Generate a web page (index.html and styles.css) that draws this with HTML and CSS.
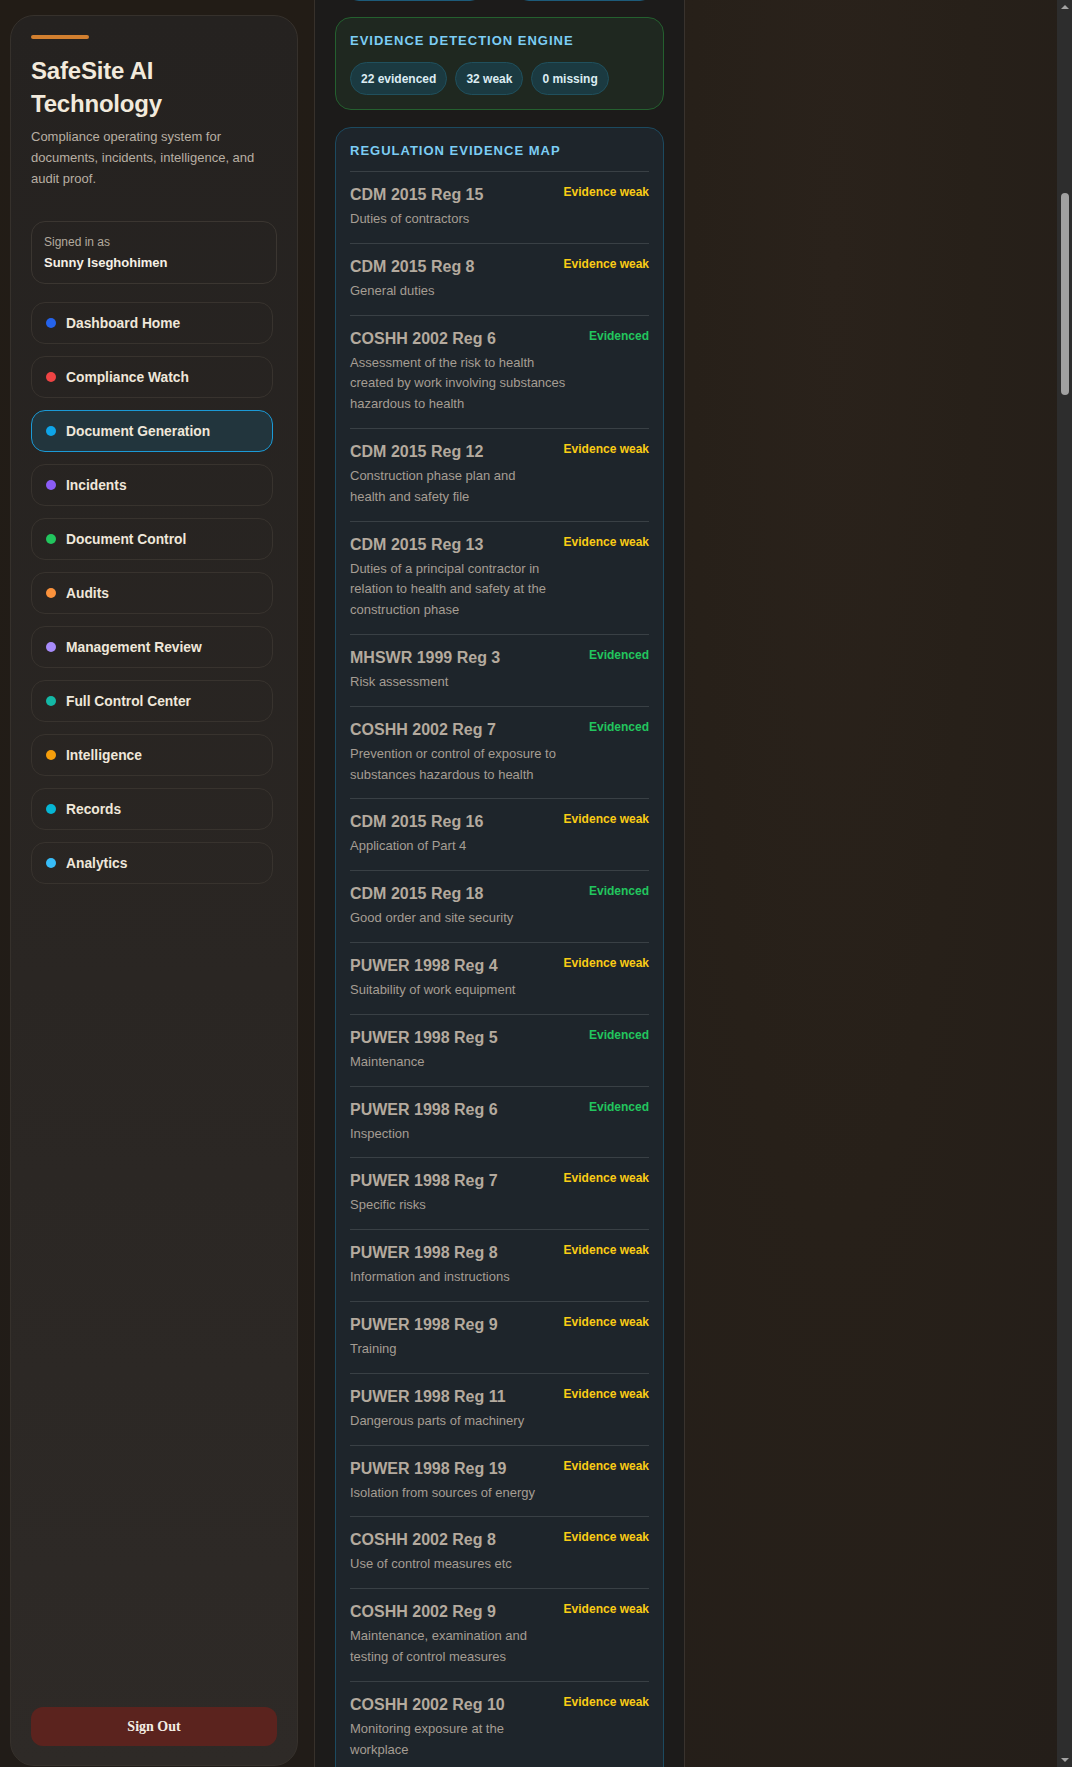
FILE: index.html
```html
<!DOCTYPE html>
<html lang="en">
<head>
<meta charset="utf-8">
<title>SafeSite AI Technology</title>
<link rel="stylesheet" href="styles.css">
</head>
<body>
<div class="app">
  <aside class="aside">
    <div class="side-card">
      <div class="brand-bar"></div>
      <h1 class="brand">SafeSite AI Technology</h1>
      <p class="brand-desc">Compliance operating system for documents, incidents, intelligence, and audit proof.</p>
      <div class="signed">
        <div class="signed-label">Signed in as</div>
        <div class="signed-name">Sunny Iseghohimen</div>
      </div>
      <nav class="nav">
        <a class="nav-item"><span class="dot c-blue"></span>Dashboard Home</a>
        <a class="nav-item"><span class="dot c-red"></span>Compliance Watch</a>
        <a class="nav-item active"><span class="dot c-sky"></span>Document Generation</a>
        <a class="nav-item"><span class="dot c-violet"></span>Incidents</a>
        <a class="nav-item"><span class="dot c-green"></span>Document Control</a>
        <a class="nav-item"><span class="dot c-orange"></span>Audits</a>
        <a class="nav-item"><span class="dot c-lilac"></span>Management Review</a>
        <a class="nav-item"><span class="dot c-teal"></span>Full Control Center</a>
        <a class="nav-item"><span class="dot c-amber"></span>Intelligence</a>
        <a class="nav-item"><span class="dot c-cyan"></span>Records</a>
        <a class="nav-item"><span class="dot c-light"></span>Analytics</a>
      </nav>
      <button class="signout">Sign Out</button>
    </div>
  </aside>

  <main class="main">
    <div class="prev-stats">
      <div class="prev-box"></div>
      <div class="prev-box"></div>
    </div>

    <section class="card card-green">
      <h2 class="card-title">Evidence Detection Engine</h2>
      <div class="pills">
        <span class="pill">22 evidenced</span>
        <span class="pill">32 weak</span>
        <span class="pill">0 missing</span>
      </div>
    </section>

    <section class="card card-blue">
      <h2 class="card-title">Regulation Evidence Map</h2>
      <ul class="reg-list">
        <li class="reg"><div class="reg-text"><div class="reg-name">CDM 2015 Reg 15</div><div class="reg-desc">Duties of contractors</div></div><span class="badge weak">Evidence weak</span></li>
        <li class="reg"><div class="reg-text"><div class="reg-name">CDM 2015 Reg 8</div><div class="reg-desc">General duties</div></div><span class="badge weak">Evidence weak</span></li>
        <li class="reg"><div class="reg-text"><div class="reg-name">COSHH 2002 Reg 6</div><div class="reg-desc">Assessment of the risk to health created by work involving substances hazardous to health</div></div><span class="badge ok">Evidenced</span></li>
        <li class="reg"><div class="reg-text"><div class="reg-name">CDM 2015 Reg 12</div><div class="reg-desc">Construction phase plan and health and safety file</div></div><span class="badge weak">Evidence weak</span></li>
        <li class="reg"><div class="reg-text"><div class="reg-name">CDM 2015 Reg 13</div><div class="reg-desc">Duties of a principal contractor in relation to health and safety at the construction phase</div></div><span class="badge weak">Evidence weak</span></li>
        <li class="reg"><div class="reg-text"><div class="reg-name">MHSWR 1999 Reg 3</div><div class="reg-desc">Risk assessment</div></div><span class="badge ok">Evidenced</span></li>
        <li class="reg"><div class="reg-text"><div class="reg-name">COSHH 2002 Reg 7</div><div class="reg-desc">Prevention or control of exposure to substances hazardous to health</div></div><span class="badge ok">Evidenced</span></li>
        <li class="reg"><div class="reg-text"><div class="reg-name">CDM 2015 Reg 16</div><div class="reg-desc">Application of Part 4</div></div><span class="badge weak">Evidence weak</span></li>
        <li class="reg"><div class="reg-text"><div class="reg-name">CDM 2015 Reg 18</div><div class="reg-desc">Good order and site security</div></div><span class="badge ok">Evidenced</span></li>
        <li class="reg"><div class="reg-text"><div class="reg-name">PUWER 1998 Reg 4</div><div class="reg-desc">Suitability of work equipment</div></div><span class="badge weak">Evidence weak</span></li>
        <li class="reg"><div class="reg-text"><div class="reg-name">PUWER 1998 Reg 5</div><div class="reg-desc">Maintenance</div></div><span class="badge ok">Evidenced</span></li>
        <li class="reg"><div class="reg-text"><div class="reg-name">PUWER 1998 Reg 6</div><div class="reg-desc">Inspection</div></div><span class="badge ok">Evidenced</span></li>
        <li class="reg"><div class="reg-text"><div class="reg-name">PUWER 1998 Reg 7</div><div class="reg-desc">Specific risks</div></div><span class="badge weak">Evidence weak</span></li>
        <li class="reg"><div class="reg-text"><div class="reg-name">PUWER 1998 Reg 8</div><div class="reg-desc">Information and instructions</div></div><span class="badge weak">Evidence weak</span></li>
        <li class="reg"><div class="reg-text"><div class="reg-name">PUWER 1998 Reg 9</div><div class="reg-desc">Training</div></div><span class="badge weak">Evidence weak</span></li>
        <li class="reg"><div class="reg-text"><div class="reg-name">PUWER 1998 Reg 11</div><div class="reg-desc">Dangerous parts of machinery</div></div><span class="badge weak">Evidence weak</span></li>
        <li class="reg"><div class="reg-text"><div class="reg-name">PUWER 1998 Reg 19</div><div class="reg-desc">Isolation from sources of energy</div></div><span class="badge weak">Evidence weak</span></li>
        <li class="reg"><div class="reg-text"><div class="reg-name">COSHH 2002 Reg 8</div><div class="reg-desc">Use of control measures etc</div></div><span class="badge weak">Evidence weak</span></li>
        <li class="reg"><div class="reg-text"><div class="reg-name">COSHH 2002 Reg 9</div><div class="reg-desc">Maintenance, examination and testing of control measures</div></div><span class="badge weak">Evidence weak</span></li>
        <li class="reg"><div class="reg-text"><div class="reg-name">COSHH 2002 Reg 10</div><div class="reg-desc">Monitoring exposure at the workplace</div></div><span class="badge weak">Evidence weak</span></li>
      </ul>
    </section>
  </main>

  <div class="backdrop"></div>

  <div class="scrollbar">
    <span class="sb-arrow up"></span>
    <div class="sb-track"><div class="sb-thumb"></div></div>
    <span class="sb-arrow down"></span>
  </div>
</div>
</body>
</html>
```

FILE: styles.css
```css
* { box-sizing: border-box; }

html, body {
  margin: 0;
  padding: 0;
  height: 100%;
  overflow: hidden;
}

body {
  font-family: "Liberation Sans", Arial, sans-serif;
  background: #241e18;
  color: #e9e2d7;
}

.app {
  display: flex;
  height: 100vh;
}

/* ---------- Sidebar ---------- */
.aside {
  width: 315px;
  flex: 0 0 315px;
  padding: 15px 16px 0 10px;
  background: linear-gradient(180deg, #221c16 0%, #211c18 100%);
  border-right: 1px solid #37312b;
}

.side-card {
  height: calc(100vh - 16px);
  display: flex;
  flex-direction: column;
  padding: 19px 20px 19px 20px;
  border: 1px solid #36312c;
  border-radius: 24px;
  background: linear-gradient(180deg, #252220 0%, #2a2623 55%, #2e2a27 100%);
}

.brand-bar {
  width: 58px;
  height: 4px;
  border-radius: 2px;
  background: #d27f2f;
}

.brand {
  margin: 15px 0 0;
  font-size: 24px;
  line-height: 33px;
  font-weight: 700;
  color: #f2eadc;
  letter-spacing: -0.2px;
}

.brand-desc {
  margin: 7px 0 0;
  font-size: 13px;
  line-height: 20.8px;
  color: #b8afa3;
}

.signed {
  margin-top: 32px;
  padding: 12px 12px 11px;
  border: 1px solid #3b3631;
  border-radius: 14px;
}

.signed-label {
  font-size: 12px;
  line-height: 16px;
  color: #b3aa9e;
}

.signed-name {
  margin-top: 4px;
  font-size: 13px;
  line-height: 18px;
  font-weight: 700;
  color: #f6f0e6;
}

.nav {
  display: flex;
  flex-direction: column;
  gap: 12px;
  margin-top: 18px;
  margin-right: 4px;
}

.nav-item {
  display: flex;
  align-items: center;
  gap: 10px;
  height: 42px;
  padding: 0 14px;
  border: 1px solid #38332e;
  border-radius: 14px;
  font-size: 13.8px;
  font-weight: 700;
  color: #efe7da;
  cursor: pointer;
}

.nav-item.active {
  background: #22353d;
  border-color: #1b9ad6;
}

.dot {
  width: 10px;
  height: 10px;
  border-radius: 50%;
  flex: 0 0 10px;
}
.c-blue { background: #2563eb; }
.c-red { background: #ef4444; }
.c-sky { background: #0ea5e9; }
.c-violet { background: #8b5cf6; }
.c-green { background: #22c55e; }
.c-orange { background: #fb923c; }
.c-lilac { background: #a78bfa; }
.c-teal { background: #14b8a6; }
.c-amber { background: #f59e0b; }
.c-cyan { background: #06b6d4; }
.c-light { background: #38bdf8; }

.signout {
  margin-top: auto;
  height: 39px;
  width: 100%;
  border: 0;
  border-radius: 12px;
  background: #5b231e;
  color: #f4ede4;
  font-family: "Liberation Serif", "Times New Roman", serif;
  font-size: 14px;
  font-weight: 700;
  cursor: pointer;
}

/* ---------- Main column ---------- */
.main {
  width: 370px;
  flex: 0 0 370px;
  padding: 0 20px;
  background: #1c1b1a;
  border-right: 1px solid #39332e;
}

.prev-stats {
  display: grid;
  grid-template-columns: 135px 135px;
  gap: 35px;
  margin: -40px 12px 0;
}

.prev-box {
  height: 41px;
  border: 1px solid #1d5b7a;
  border-radius: 12px;
  background: #1d2a31;
}

.card {
  border-radius: 16px;
  padding: 14px 14px;
  border: 1px solid;
}

.card-green {
  margin-top: 16px;
  background: #1f2820;
  border-color: #24602f;
}

.card-blue {
  margin-top: 17px;
  background: #1e252b;
  border-color: #1c4a60;
}

.card-title {
  margin: 0;
  font-size: 13px;
  line-height: 18px;
  font-weight: 700;
  letter-spacing: 1px;
  text-transform: uppercase;
  color: #7ccdf4;
}

.pills {
  display: flex;
  gap: 8px;
  margin-top: 12px;
}

.pill {
  height: 33px;
  display: inline-flex;
  align-items: center;
  padding: 0 10px;
  border: 1px solid #20505d;
  border-radius: 17px;
  background: #1b3a41;
  font-size: 12px;
  font-weight: 700;
  color: #dcecf2;
}

.reg-list {
  list-style: none;
  margin: 11px 0 0;
  padding: 0;
}

.reg {
  display: flex;
  align-items: flex-start;
  gap: 12px;
  padding: 12px 0 13px;
  border-top: 1px solid #394045;
}

.reg-text {
  flex: 1;
  min-width: 0;
}

.reg-name {
  font-size: 16px;
  line-height: 22px;
  font-weight: 700;
  color: #b4aa9e;
}

.reg-desc {
  margin-top: 3px;
  font-size: 13px;
  line-height: 20.8px;
  color: #a59d93;
}

.badge {
  flex: 0 0 auto;
  font-size: 12px;
  line-height: 16px;
  font-weight: 700;
}
.badge.weak { color: #facc15; }
.badge.ok { color: #22c55e; }

/* ---------- Backdrop ---------- */
.backdrop {
  flex: 1;
  background: radial-gradient(ellipse at 40% 15%, #2a221b 0%, #272019 45%, #241e19 100%);
}

/* ---------- Scrollbar ---------- */
.scrollbar {
  width: 15px;
  flex: 0 0 15px;
  display: flex;
  flex-direction: column;
  background: #2d2d2d;
}

.sb-arrow {
  height: 14px;
  display: flex;
  align-items: center;
  justify-content: center;
}
.sb-arrow::before {
  content: "";
  border-left: 4px solid transparent;
  border-right: 4px solid transparent;
}
.sb-arrow.up::before { border-bottom: 4px solid #a3a3a3; }
.sb-arrow.down::before { border-top: 4px solid #a3a3a3; }

.sb-track {
  flex: 1;
  padding-top: 179px;
  display: flex;
  justify-content: center;
}

.sb-thumb {
  width: 8px;
  height: 202px;
  border-radius: 4px;
  background: #a1a1a1;
}
```
